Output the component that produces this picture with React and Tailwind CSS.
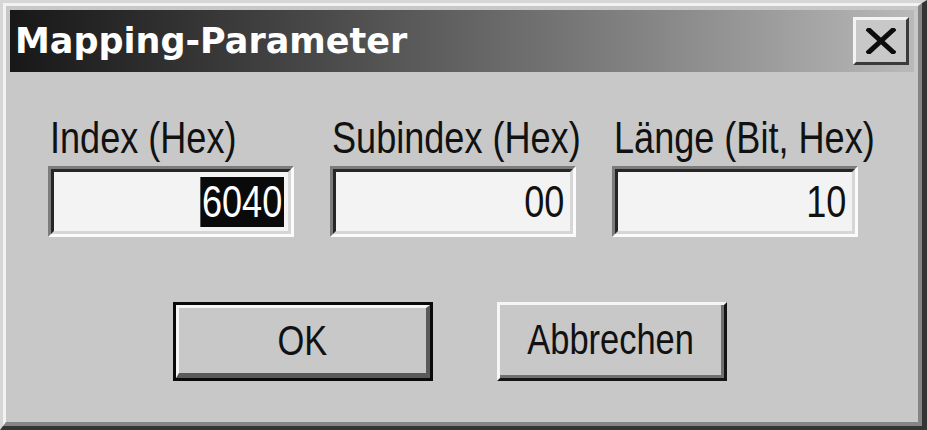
import React from "react";

const sans = { fontFamily: '"Liberation Sans", Arial, sans-serif' };

function Field({ label, value, selected }) {
  return (
    <div className="flex flex-col">
      <div className="h-[50px] pl-[2px] whitespace-nowrap">
        <span className="inline-block text-[44px] leading-none text-[#111] scale-x-[0.82] origin-left" style={sans}>
          {label}
        </span>
      </div>
      <div className="h-[71px] border-t-[3px] border-l-[3px] border-t-[#7c7c7c] border-l-[#7c7c7c] border-b-[3px] border-r-[3px] border-b-[#fbfbfb] border-r-[#fbfbfb]">
        <div className="h-full border-t-[3px] border-l-[3px] border-t-[#262626] border-l-[#262626] border-b-[3px] border-r-[3px] border-b-[#d6d6d6] border-r-[#d6d6d6] bg-[#f3f3f3] flex items-center justify-end pr-[4px]">
          <span
            className={
              "inline-block scale-x-[0.82] origin-right text-[44px] leading-none px-[2px] py-[3px] " +
              (selected ? "bg-[#0a0a0a] text-white" : "text-[#111]")
            }
            style={sans}
          >
            {value}
          </span>
        </div>
      </div>
    </div>
  );
}

export default function App() {
  return (
    <div className="w-[927px] h-[430px] bg-[#c8c8c8] border-t-[3px] border-l-[3px] border-t-[#d6d6d6] border-l-[#d6d6d6] border-r-[5px] border-b-[4px] border-r-[#353535] border-b-[#353535] overflow-hidden">
      <div className="h-full border-t-[3px] border-l-[3px] border-t-[#f2f2f2] border-l-[#f2f2f2] border-r-[4px] border-b-[4px] border-r-[#858585] border-b-[#858585] p-[4px] flex flex-col">
        {/* Title bar */}
        <div className="h-[62px] shrink-0 flex items-center justify-between pl-[5px] pr-[5px] bg-gradient-to-r from-[#181818] to-[#b9b9b9]">
          <span
            className="text-white font-bold text-[35px] leading-none"
            style={{ fontFamily: '"DejaVu Sans", Verdana, sans-serif' }}
          >
            Mapping-Parameter
          </span>
          <div className="w-[56px] h-[48px] border-t-[3px] border-l-[3px] border-t-[#f4f4f4] border-l-[#f4f4f4] border-r-[3px] border-b-[3px] border-r-[#3a3a3a] border-b-[#3a3a3a] bg-[#c8c8c8] flex items-center justify-center">
            <svg width="30" height="26" viewBox="0 0 30 26">
              <path d="M3 2 L27 24 M27 2 L3 24" stroke="#0c0c0c" strokeWidth="5" strokeLinecap="square" />
            </svg>
          </div>
        </div>

        {/* Fields */}
        <div className="pl-[38px] pt-[44px] grid grid-cols-[246px_246px_246px] gap-x-[36px]">
          <Field label="Index (Hex)" value="6040" selected />
          <Field label="Subindex (Hex)" value="00" />
          <Field label="Länge (Bit, Hex)" value="10" />
        </div>

        {/* Buttons */}
        <div className="pt-[65px] pl-[163px] flex gap-[64px]">
          <div className="w-[260px] h-[79px] border-[3px] border-[#0a0a0a]">
            <div className="h-full border-t-[3px] border-l-[3px] border-t-[#f6f6f6] border-l-[#f6f6f6] border-r-[4px] border-b-[5px] border-r-[#5a5a5a] border-b-[#5a5a5a] flex items-center justify-center">
              <span className="inline-block scale-x-[0.82] text-[42px] leading-none text-[#111]" style={sans}>OK</span>
            </div>
          </div>
          <div className="w-[230px] h-[79px] border-t-[3px] border-l-[3px] border-t-[#f6f6f6] border-l-[#f6f6f6] border-r-[3px] border-b-[3px] border-r-[#151515] border-b-[#151515]">
            <div className="h-full border-r-[3px] border-b-[3px] border-r-[#707070] border-b-[#707070] flex items-center justify-center">
              <span className="inline-block scale-x-[0.82] text-[42px] leading-none text-[#111]" style={sans}>Abbrechen</span>
            </div>
          </div>
        </div>
      </div>
    </div>
  );
}
